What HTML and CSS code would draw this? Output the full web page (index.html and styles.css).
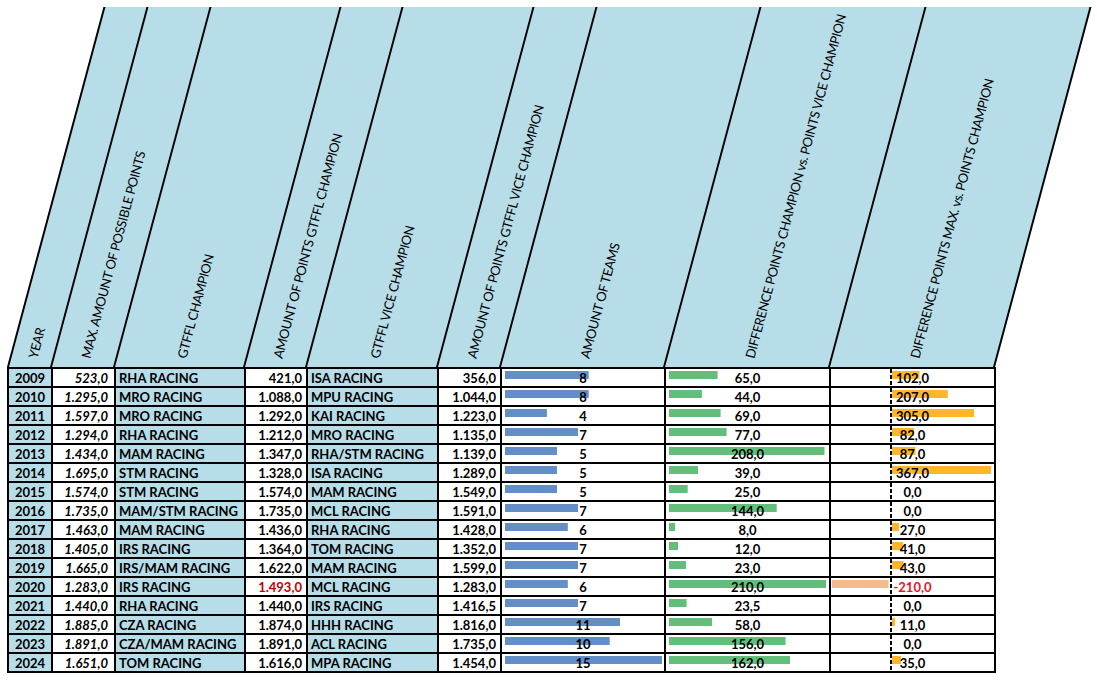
FILE: index.html
```html
<!DOCTYPE html>
<html>
<head>
<meta charset="utf-8">
<title>GTFFL Champions</title>
<link rel="stylesheet" href="styles.css">
</head>
<body>
<div class="sheet">
  <div class="head">
    <div class="hc"><span class="hl">YEAR</span></div>
    <div class="hc"><span class="hl">MAX. AMOUNT OF POSSIBLE POINTS</span></div>
    <div class="hc"><span class="hl">GTFFL CHAMPION</span></div>
    <div class="hc"><span class="hl">AMOUNT OF POINTS GTFFL CHAMPION</span></div>
    <div class="hc"><span class="hl">GTFFL VICE CHAMPION</span></div>
    <div class="hc"><span class="hl">AMOUNT OF POINTS GTFFL VICE CHAMPION</span></div>
    <div class="hc"><span class="hl">AMOUNT OF TEAMS</span></div>
    <div class="hc"><span class="hl">DIFFERENCE POINTS CHAMPION vs. POINTS VICE CHAMPION</span></div>
    <div class="hc hc-last"><span class="hl">DIFFERENCE POINTS MAX. vs. POINTS CHAMPION</span></div>
  </div>
  <table class="grid">
    <colgroup>
      <col class="w-year"><col class="w-max"><col class="w-team"><col class="w-pts"><col class="w-team2"><col class="w-pts2"><col class="w-bar"><col class="w-bar2"><col class="w-bar2">
    </colgroup>
    <tbody>
      <tr><td class="yr">2009</td><td class="max">523,0</td><td class="team">RHA RACING</td><td class="pts">421,0</td><td class="team">ISA RACING</td><td class="pts">356,0</td><td class="bar teams" style="--w:83.7px">8</td><td class="bar diff" style="--w:48.6px">65,0</td><td class="bar dmax" style="--w:27.5px">102,0</td></tr>
      <tr><td class="yr">2010</td><td class="max">1.295,0</td><td class="team">MRO RACING</td><td class="pts">1.088,0</td><td class="team">MPU RACING</td><td class="pts">1.044,0</td><td class="bar teams" style="--w:83.7px">8</td><td class="bar diff" style="--w:32.9px">44,0</td><td class="bar dmax" style="--w:55.8px">207,0</td></tr>
      <tr><td class="yr">2011</td><td class="max">1.597,0</td><td class="team">MRO RACING</td><td class="pts">1.292,0</td><td class="team">KAI RACING</td><td class="pts">1.223,0</td><td class="bar teams" style="--w:41.9px">4</td><td class="bar diff" style="--w:51.6px">69,0</td><td class="bar dmax" style="--w:82.3px">305,0</td></tr>
      <tr><td class="yr">2012</td><td class="max">1.294,0</td><td class="team">RHA RACING</td><td class="pts">1.212,0</td><td class="team">MRO RACING</td><td class="pts">1.135,0</td><td class="bar teams" style="--w:73.3px">7</td><td class="bar diff" style="--w:57.6px">77,0</td><td class="bar dmax" style="--w:22.1px">82,0</td></tr>
      <tr><td class="yr">2013</td><td class="max">1.434,0</td><td class="team">MAM RACING</td><td class="pts">1.347,0</td><td class="team">RHA/STM RACING</td><td class="pts">1.139,0</td><td class="bar teams" style="--w:52.3px">5</td><td class="bar diff" style="--w:155.5px">208,0</td><td class="bar dmax" style="--w:23.5px">87,0</td></tr>
      <tr><td class="yr">2014</td><td class="max">1.695,0</td><td class="team">STM RACING</td><td class="pts">1.328,0</td><td class="team">ISA RACING</td><td class="pts">1.289,0</td><td class="bar teams" style="--w:52.3px">5</td><td class="bar diff" style="--w:29.2px">39,0</td><td class="bar dmax" style="--w:99px">367,0</td></tr>
      <tr><td class="yr">2015</td><td class="max">1.574,0</td><td class="team">STM RACING</td><td class="pts">1.574,0</td><td class="team">MAM RACING</td><td class="pts">1.549,0</td><td class="bar teams" style="--w:52.3px">5</td><td class="bar diff" style="--w:18.7px">25,0</td><td class="bar dmax" style="--w:0px">0,0</td></tr>
      <tr><td class="yr">2016</td><td class="max">1.735,0</td><td class="team">MAM/STM RACING</td><td class="pts">1.735,0</td><td class="team">MCL RACING</td><td class="pts">1.591,0</td><td class="bar teams" style="--w:73.3px">7</td><td class="bar diff" style="--w:107.7px">144,0</td><td class="bar dmax" style="--w:0px">0,0</td></tr>
      <tr><td class="yr">2017</td><td class="max">1.463,0</td><td class="team">MAM RACING</td><td class="pts">1.436,0</td><td class="team">RHA RACING</td><td class="pts">1.428,0</td><td class="bar teams" style="--w:62.8px">6</td><td class="bar diff" style="--w:6px">8,0</td><td class="bar dmax" style="--w:7.3px">27,0</td></tr>
      <tr><td class="yr">2018</td><td class="max">1.405,0</td><td class="team">IRS RACING</td><td class="pts">1.364,0</td><td class="team">TOM RACING</td><td class="pts">1.352,0</td><td class="bar teams" style="--w:73.3px">7</td><td class="bar diff" style="--w:9px">12,0</td><td class="bar dmax" style="--w:11.1px">41,0</td></tr>
      <tr><td class="yr">2019</td><td class="max">1.665,0</td><td class="team">IRS/MAM RACING</td><td class="pts">1.622,0</td><td class="team">MAM RACING</td><td class="pts">1.599,0</td><td class="bar teams" style="--w:73.3px">7</td><td class="bar diff" style="--w:17.2px">23,0</td><td class="bar dmax" style="--w:11.6px">43,0</td></tr>
      <tr><td class="yr">2020</td><td class="max">1.283,0</td><td class="team">IRS RACING</td><td class="pts alert">1.493,0</td><td class="team">MCL RACING</td><td class="pts">1.283,0</td><td class="bar teams" style="--w:62.8px">6</td><td class="bar diff" style="--w:157px">210,0</td><td class="bar dmax neg" style="--w:56.6px">-210,0</td></tr>
      <tr><td class="yr">2021</td><td class="max">1.440,0</td><td class="team">RHA RACING</td><td class="pts">1.440,0</td><td class="team">IRS RACING</td><td class="pts">1.416,5</td><td class="bar teams" style="--w:73.3px">7</td><td class="bar diff" style="--w:17.6px">23,5</td><td class="bar dmax" style="--w:0px">0,0</td></tr>
      <tr><td class="yr">2022</td><td class="max">1.885,0</td><td class="team">CZA RACING</td><td class="pts">1.874,0</td><td class="team">HHH RACING</td><td class="pts">1.816,0</td><td class="bar teams" style="--w:115.1px">11</td><td class="bar diff" style="--w:43.4px">58,0</td><td class="bar dmax" style="--w:3px">11,0</td></tr>
      <tr><td class="yr">2023</td><td class="max">1.891,0</td><td class="team">CZA/MAM RACING</td><td class="pts">1.891,0</td><td class="team">ACL RACING</td><td class="pts">1.735,0</td><td class="bar teams" style="--w:104.7px">10</td><td class="bar diff" style="--w:116.6px">156,0</td><td class="bar dmax" style="--w:0px">0,0</td></tr>
      <tr><td class="yr">2024</td><td class="max">1.651,0</td><td class="team">TOM RACING</td><td class="pts">1.616,0</td><td class="team">MPA RACING</td><td class="pts">1.454,0</td><td class="bar teams" style="--w:157px">15</td><td class="bar diff" style="--w:121.1px">162,0</td><td class="bar dmax" style="--w:9.4px">35,0</td></tr>
    </tbody>
  </table>
</div>
</body>
</html>
```

FILE: styles.css
```css
* { box-sizing: border-box; }

body {
  margin: 0;
  background: #ffffff;
  color: #000000;
  font-family: "Lato", "Open Sans", sans-serif;
}

.sheet {
  padding: 7px 0 0 7px;
}

/* ---------- slanted header ---------- */
.head {
  display: grid;
  grid-template-columns: 43px 63px 130px 62px 131px 63px 164px 165px 167px;
  height: 360px;
}

.hc {
  background: #b7dde8;
  border-left: 2px solid #000;
  transform: skewX(-15deg);
  transform-origin: 0 100%;
  display: flex;
  justify-content: center;
  align-items: flex-end;
  padding-bottom: 1px;
}

.hc-last {
  border-right: 2px solid #000;
}

.hl {
  width: 0;
  white-space: nowrap;
  font-size: 13px;
  letter-spacing: -0.4px;
  line-height: 16px;
  transform-origin: 0 50%;
  transform: skewX(15deg) rotate(-75deg);
}

/* ---------- data grid ---------- */
.grid {
  border-collapse: collapse;
  table-layout: fixed;
  width: 988px;
}

.w-year { width: 44px; }
.w-max { width: 63px; }
.w-team { width: 130px; }
.w-pts { width: 62px; }
.w-team2 { width: 131px; }
.w-pts2 { width: 63px; }
.w-bar { width: 164px; }
.w-bar2 { width: 165px; }

.grid tr {
  height: 19px;
}

.grid td {
  border: 2px solid #000;
  padding: 0 4px;
  font-size: 13px;
  font-weight: 700;
  line-height: 15px;
  white-space: nowrap;
  vertical-align: bottom;
  background-color: #ffffff;
}

.grid td.yr { text-align: center; background-color: #b7dde8; }
.grid td.team { text-align: left; background-color: #b7dde8; padding-left: 3px; }
.grid td.max { text-align: right; font-style: italic; padding-right: 6px; }
.grid td.pts { text-align: right; }
.grid td.alert { color: #c00000; }

.bar {
  text-align: center;
  background-repeat: no-repeat;
  background-size: var(--w) 8px;
  background-position: 3px 2px;
}

.teams { background-image: linear-gradient(#638ec6, #638ec6); }
.diff { background-image: linear-gradient(#63be7b, #63be7b); }

.dmax {
  background-image:
    repeating-linear-gradient(to bottom, #000 0 4px, transparent 4px 6px),
    linear-gradient(#ffb628, #ffb628);
  background-size: 2px 100%, var(--w) 8px;
  background-position: 59px 0, 61px 2px;
}

.grid td.neg {
  color: #e8141e;
  background-image:
    repeating-linear-gradient(to bottom, #000 0 4px, transparent 4px 6px),
    linear-gradient(#f5bb8f, #f5bb8f);
  background-position: 59px 0, calc(58px - var(--w)) 2px;
}
```
